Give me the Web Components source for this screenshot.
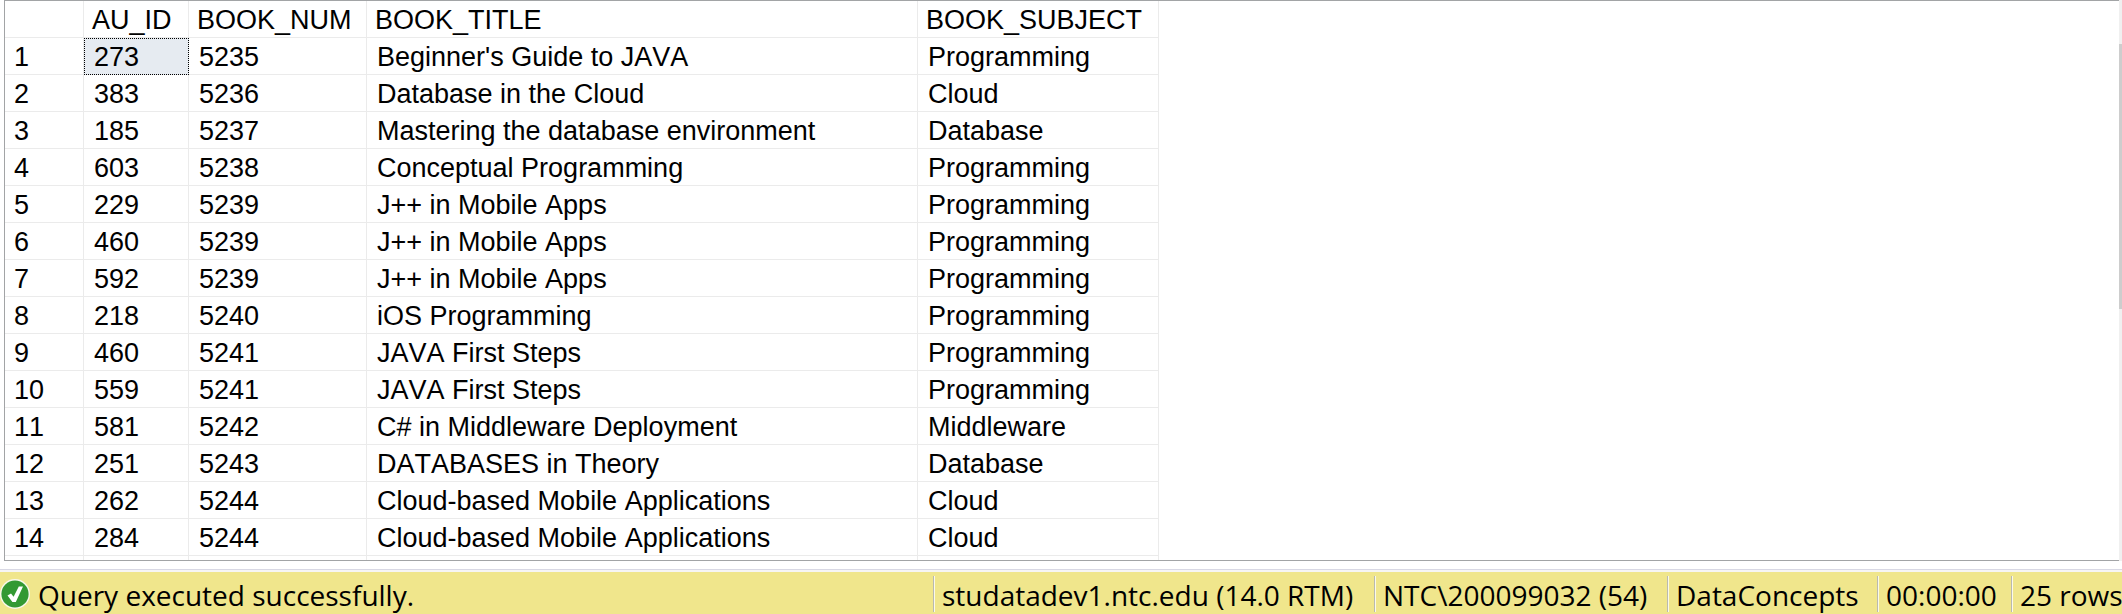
<!DOCTYPE html>
<html lang="en">
<head>
<meta charset="utf-8">
<title>Query results</title>
<style>
    html, body {
        height: 100%;
        margin: 0;
    }

    body {
        background-color: #fff;
        overflow: hidden;
    }
</style>
</head>
<body>
<query-results>
    <results-grid slot="grid"></results-grid>
    <status-bar slot="status">
        <status-message slot="message">Query executed successfully.</status-message>
        <status-panel class="server">studatadev1.ntc.edu (14.0 RTM)</status-panel>
        <status-panel class="user">NTC\200099032 (54)</status-panel>
        <status-panel class="database">DataConcepts</status-panel>
        <status-panel class="time">00:00:00</status-panel>
        <status-panel class="rows">25 rows</status-panel>
    </status-bar>
</query-results>

<script>
const columns = ['AU_ID', 'BOOK_NUM', 'BOOK_TITLE', 'BOOK_SUBJECT'];

const books = [
    [273, 5235, "Beginner's Guide to JAVA", 'Programming'],
    [383, 5236, 'Database in the Cloud', 'Cloud'],
    [185, 5237, 'Mastering the database environment', 'Database'],
    [603, 5238, 'Conceptual Programming', 'Programming'],
    [229, 5239, 'J++ in Mobile Apps', 'Programming'],
    [460, 5239, 'J++ in Mobile Apps', 'Programming'],
    [592, 5239, 'J++ in Mobile Apps', 'Programming'],
    [218, 5240, 'iOS Programming', 'Programming'],
    [460, 5241, 'JAVA First Steps', 'Programming'],
    [559, 5241, 'JAVA First Steps', 'Programming'],
    [581, 5242, 'C# in Middleware Deployment', 'Middleware'],
    [251, 5243, 'DATABASES in Theory', 'Database'],
    [262, 5244, 'Cloud-based Mobile Applications', 'Cloud'],
    [284, 5244, 'Cloud-based Mobile Applications', 'Cloud']
];

// page frame: grid on top, status bar at the bottom
class QueryResults extends HTMLElement {
    constructor() {
        super();
        const shadowRoot = this.attachShadow({ mode: 'open' });
        shadowRoot.innerHTML = `
        <style>
            :host {
                display: flex;
                flex-direction: column;
                height: 100%;
            }

            .pane {
                flex: 1;
                min-height: 0;
                display: flex;
                margin-left: 4px;
            }

            .status {
                flex: none;
                margin-top: 8px;
            }
        </style>
        <div class="pane">
            <slot name="grid"></slot>
            <scroll-track></scroll-track>
        </div>
        <div class="status"><slot name="status"></slot></div>
        `;
    }
}

class ResultsGrid extends HTMLElement {
    constructor() {
        super();
        const shadowRoot = this.attachShadow({ mode: 'open' });
        shadowRoot.innerHTML = `
        <style>
            :host {
                display: block;
                flex: 1;
                min-width: 0;
                overflow: hidden;
                box-sizing: border-box;
                border: 1px solid #a2a4a6;
                border-right: 0;
                font-family: "Liberation Sans", Arial, sans-serif;
                font-size: 27px;
                font-kerning: none;
                line-height: 34px;
                color: #000;
            }

            table {
                table-layout: fixed;
                width: 1154px;
                border-collapse: separate;
                border-spacing: 0;
            }

            .num { width: 79px; }
            .au { width: 105px; }
            .book { width: 178px; }
            .title { width: 551px; }
            .subject { width: 241px; }

            th, td {
                box-sizing: border-box;
                height: 37px;
                padding: 2px 0 0 10px;
                border-right: 1px solid #ebebeb;
                border-bottom: 1px solid #ebebeb;
                font-weight: normal;
                text-align: left;
                white-space: nowrap;
            }

            thead th {
                padding-left: 8px;
            }

            tbody th {
                padding-left: 9px;
            }

            td.selected {
                background-color: #e6ebf1;
                outline: 1px dotted #000;
                outline-offset: -1px;
                border-color: transparent;
            }

            tfoot td {
                border-bottom: 0;
            }
        </style>
        <table>
            <colgroup>
                <col class="num"><col class="au"><col class="book"><col class="title"><col class="subject">
            </colgroup>
            <thead>
                <tr><th></th>${columns.map(c => `<th scope="col">${c}</th>`).join('')}</tr>
            </thead>
            <tbody>
                ${books.map((row, i) => `<tr><th scope="row">${i + 1}</th>${row.map(v => `<td>${v}</td>`).join('')}</tr>`).join('')}
            </tbody>
            <tfoot>
                <tr><td></td><td></td><td></td><td></td><td></td></tr>
            </tfoot>
        </table>
        `;
        shadowRoot.querySelector('tbody td').classList.add('selected');
    }
}

class ScrollTrack extends HTMLElement {
    constructor() {
        super();
        const shadowRoot = this.attachShadow({ mode: 'open' });
        shadowRoot.innerHTML = `
        <style>
            :host {
                display: flex;
                flex-direction: column;
                flex: none;
                width: 3px;
                background-color: #f0f0f0;
            }

            .thumb {
                height: 265px;
                margin-top: 44px;
                background-color: #cdcdcd;
            }
        </style>
        <div class="thumb"></div>
        `;
    }
}

class StatusBar extends HTMLElement {
    constructor() {
        super();
        const shadowRoot = this.attachShadow({ mode: 'open' });
        shadowRoot.innerHTML = `
        <style>
            :host {
                display: flex;
                align-items: stretch;
                box-sizing: border-box;
                height: 45px;
                border-top: 1px solid #d8d8e4;
                box-shadow: inset 0 2px #f6f5f4;
                padding-top: 2px;
                background-color: #f0e68c;
                font-family: "Open Sans", "Segoe UI", sans-serif;
                font-size: 28px;
                font-kerning: none;
                line-height: 38px;
                color: #000;
                white-space: nowrap;
                overflow: hidden;
            }
        </style>
        <slot name="message"></slot>
        <slot></slot>
        `;
    }
}

class StatusMessage extends HTMLElement {
    constructor() {
        super();
        const shadowRoot = this.attachShadow({ mode: 'open' });
        shadowRoot.innerHTML = `
        <style>
            :host {
                display: flex;
                align-items: flex-start;
                gap: 8px;
                flex: 1;
                min-width: 0;
                padding-top: 4px;
            }

            svg {
                flex: none;
                margin-top: 2px;
            }
        </style>
        <svg width="30" height="32" viewBox="0 0 30 32" aria-hidden="true">
            <circle cx="15" cy="16" r="15" fill="#f8f8ec"/>
            <circle cx="15" cy="16" r="13.6" fill="#339933"/>
            <path d="M7.5 17.5L11 15.5L13.6 18.8L18.8 8.5L23 8.5L15.8 24L12.4 24Z" fill="#fff"/>
        </svg>
        <span><slot></slot></span>
        `;
    }
}

class StatusPanel extends HTMLElement {
    constructor() {
        super();
        const shadowRoot = this.attachShadow({ mode: 'open' });
        shadowRoot.innerHTML = `
        <style>
            :host {
                display: block;
                flex: none;
                box-sizing: border-box;
                margin-top: 4px;
                margin-bottom: 2px;
                padding-left: 8px;
                border-left: 1px solid #b9b9b0;
                box-shadow: inset 1px 0 #fbfae8;
            }

            :host(.server) { width: 441px; }
            :host(.user) { width: 293px; }
            :host(.database) { width: 210px; }
            :host(.time) { width: 134px; }
            :host(.rows) { width: 111px; }
        </style>
        <slot></slot>
        `;
    }
}

customElements.define('scroll-track', ScrollTrack);
customElements.define('query-results', QueryResults);
customElements.define('results-grid', ResultsGrid);
customElements.define('status-bar', StatusBar);
customElements.define('status-message', StatusMessage);
customElements.define('status-panel', StatusPanel);
</script>
</body>
</html>
